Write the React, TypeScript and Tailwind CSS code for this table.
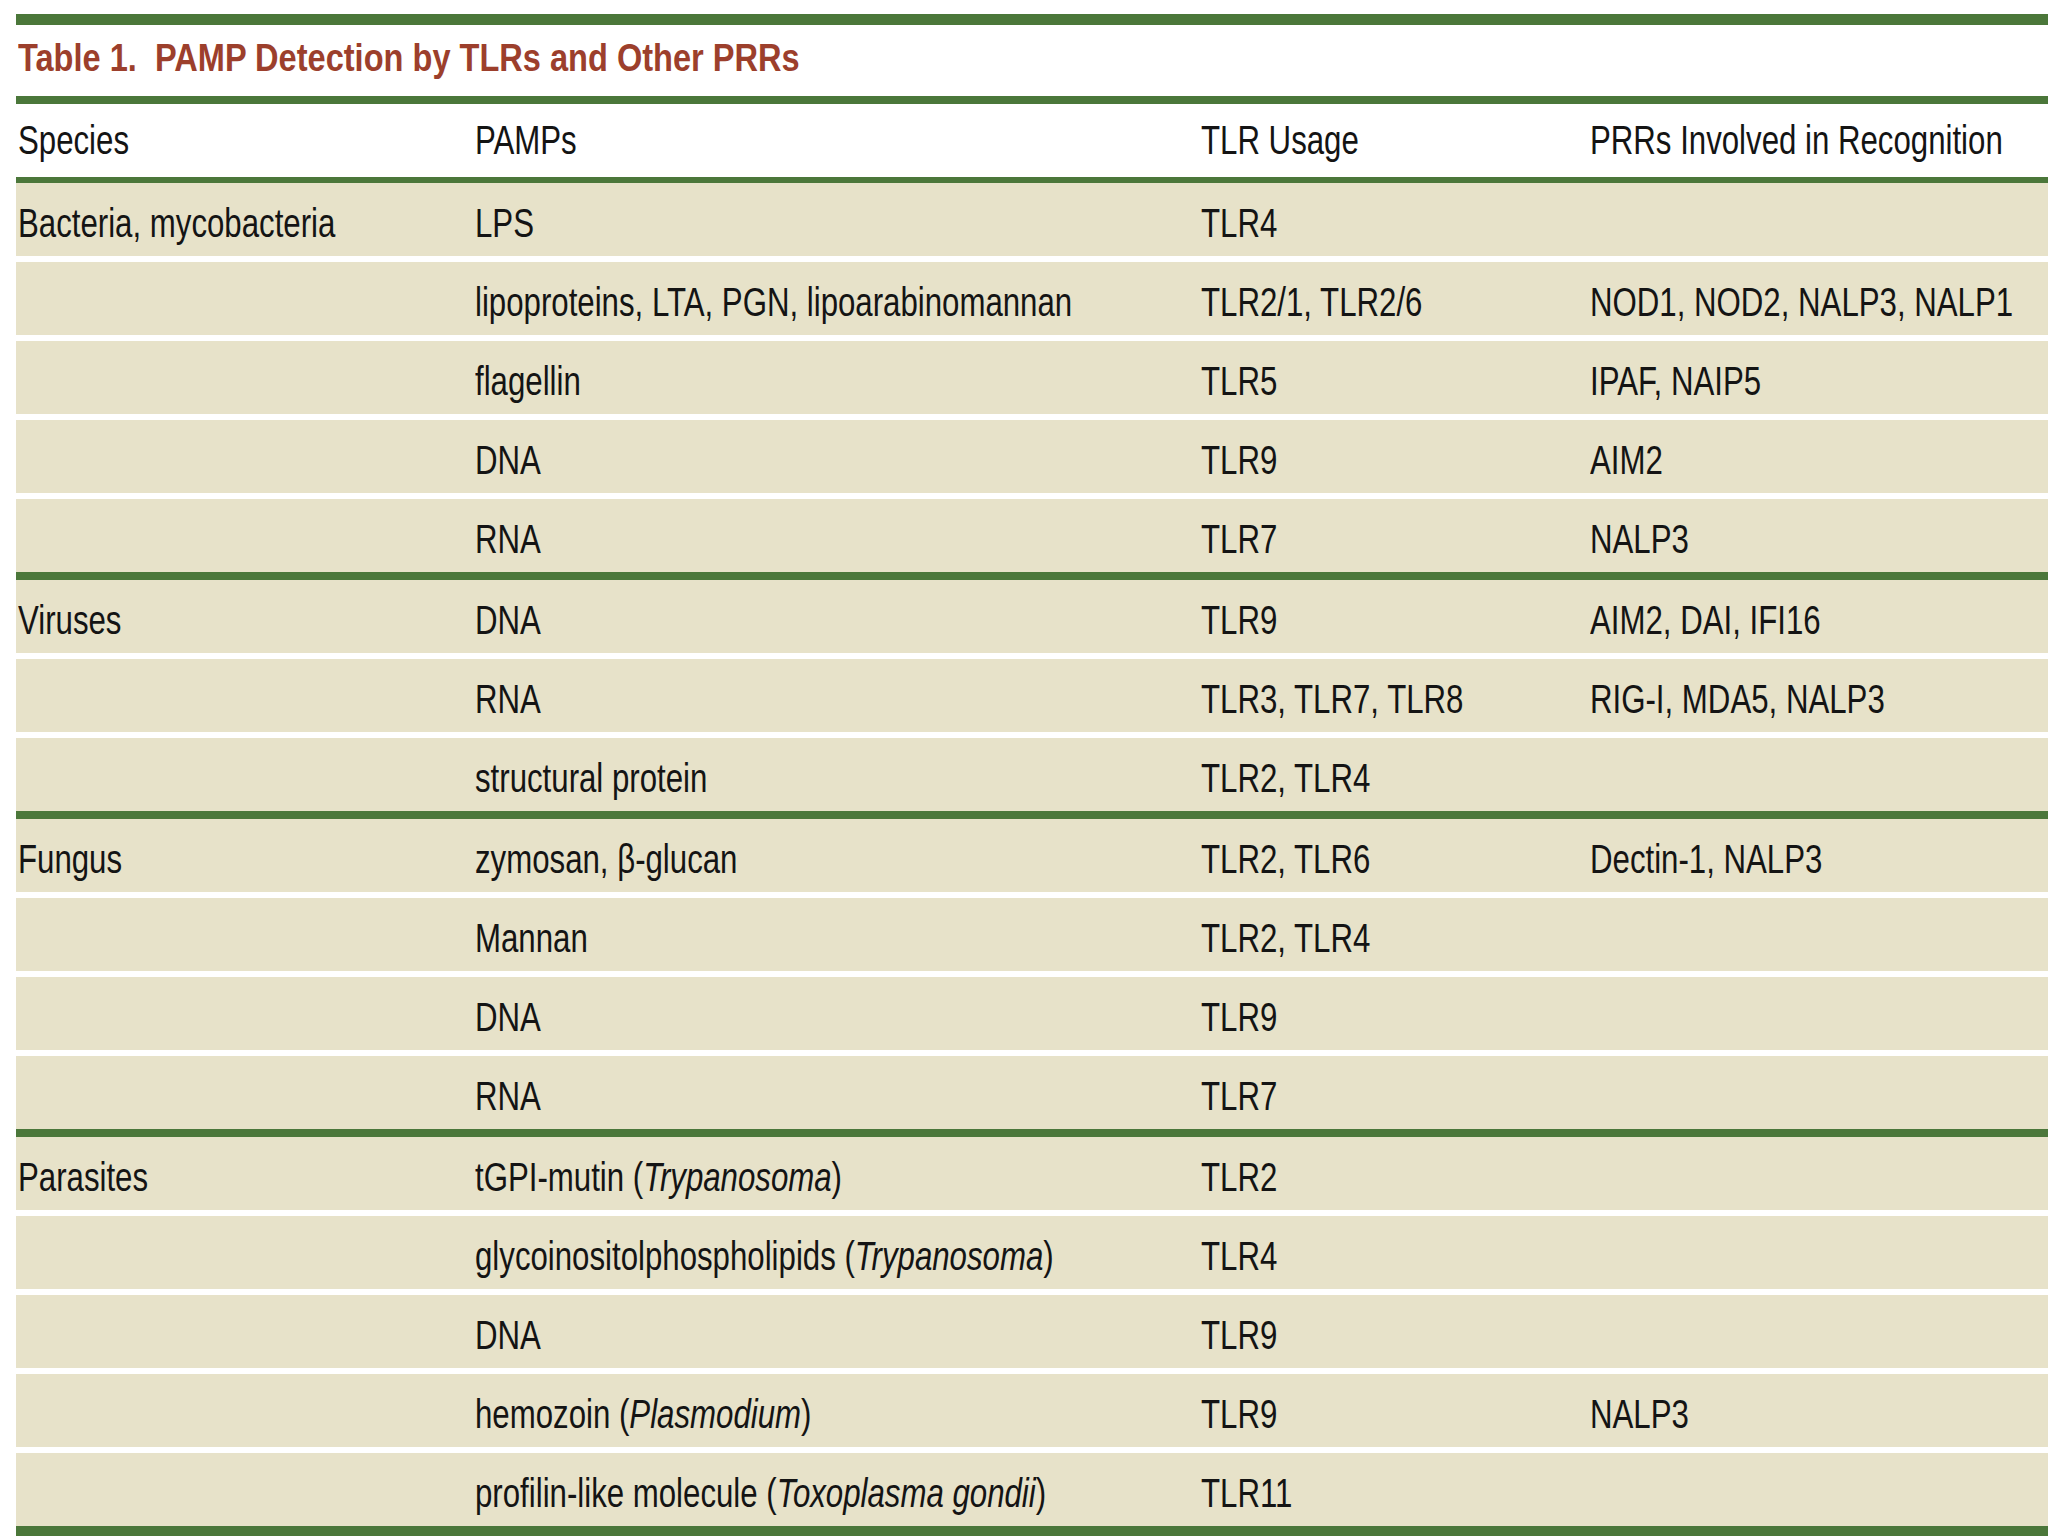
import type { ReactNode } from "react";

type Row = [ReactNode, string, string];

const groups: { species: string; rows: Row[] }[] = [
  {
    species: "Bacteria, mycobacteria",
    rows: [
      ["LPS", "TLR4", ""],
      ["lipoproteins, LTA, PGN, lipoarabinomannan", "TLR2/1, TLR2/6", "NOD1, NOD2, NALP3, NALP1"],
      ["flagellin", "TLR5", "IPAF, NAIP5"],
      ["DNA", "TLR9", "AIM2"],
      ["RNA", "TLR7", "NALP3"],
    ],
  },
  {
    species: "Viruses",
    rows: [
      ["DNA", "TLR9", "AIM2, DAI, IFI16"],
      ["RNA", "TLR3, TLR7, TLR8", "RIG-I, MDA5, NALP3"],
      ["structural protein", "TLR2, TLR4", ""],
    ],
  },
  {
    species: "Fungus",
    rows: [
      ["zymosan, β-glucan", "TLR2, TLR6", "Dectin-1, NALP3"],
      ["Mannan", "TLR2, TLR4", ""],
      ["DNA", "TLR9", ""],
      ["RNA", "TLR7", ""],
    ],
  },
  {
    species: "Parasites",
    rows: [
      [<>tGPI-mutin (<i>Trypanosoma</i>)</>, "TLR2", ""],
      [<>glycoinositolphospholipids (<i>Trypanosoma</i>)</>, "TLR4", ""],
      ["DNA", "TLR9", ""],
      [<>hemozoin (<i>Plasmodium</i>)</>, "TLR9", "NALP3"],
      [<>profilin-like molecule (<i>Toxoplasma gondii</i>)</>, "TLR11", ""],
    ],
  },
];

const cols = "grid grid-cols-[457px_726px_389px_1fr] items-center";

function Cell({ children }: { children: ReactNode }) {
  return (
    <div className="pl-[2px] whitespace-nowrap">
      <span className="inline-block origin-left scale-x-[0.78] text-[40px] leading-none text-[#141414]">
        {children}
      </span>
    </div>
  );
}

export default function App() {
  return (
    <div
      className="w-[2048px] h-[1536px] overflow-hidden bg-white pt-[14px] pl-4"
      style={{ fontFamily: '"Liberation Sans", Arial, sans-serif' }}
    >
      <div className="h-[11px] bg-[#4b773a]" />
      <div className="h-[71px] flex items-center pb-[6px] pl-[2px]">
        <span className="inline-block origin-left scale-x-[0.835] text-[39px] font-bold leading-none text-[#9c3f2c] whitespace-nowrap">
          Table 1.{"\u00a0 "}PAMP Detection by TLRs and Other PRRs
        </span>
      </div>
      <div className="h-[8px] bg-[#4b773a]" />
      <div className={`${cols} h-[73px]`}>
        <Cell>Species</Cell>
        <Cell>PAMPs</Cell>
        <Cell>TLR Usage</Cell>
        <Cell>PRRs Involved in Recognition</Cell>
      </div>
      <div className="h-[6px] bg-[#4b773a]" />

      {groups.map((g, gi) => (
        <div key={g.species}>
          {g.rows.map((r, ri) => (
            <div key={ri}>
              {ri > 0 && <div className="h-[6px] bg-white" />}
              <div className={`${cols} h-[73px] bg-[#e7e2c9] pt-2`}>
                <Cell>{ri === 0 ? g.species : ""}</Cell>
                <Cell>{r[0]}</Cell>
                <Cell>{r[1]}</Cell>
                <Cell>{r[2]}</Cell>
              </div>
            </div>
          ))}
          <div className={gi < groups.length - 1 ? "h-[8px] bg-[#4b773a]" : "h-[10px] bg-[#4b773a]"} />
        </div>
      ))}
    </div>
  );
}
